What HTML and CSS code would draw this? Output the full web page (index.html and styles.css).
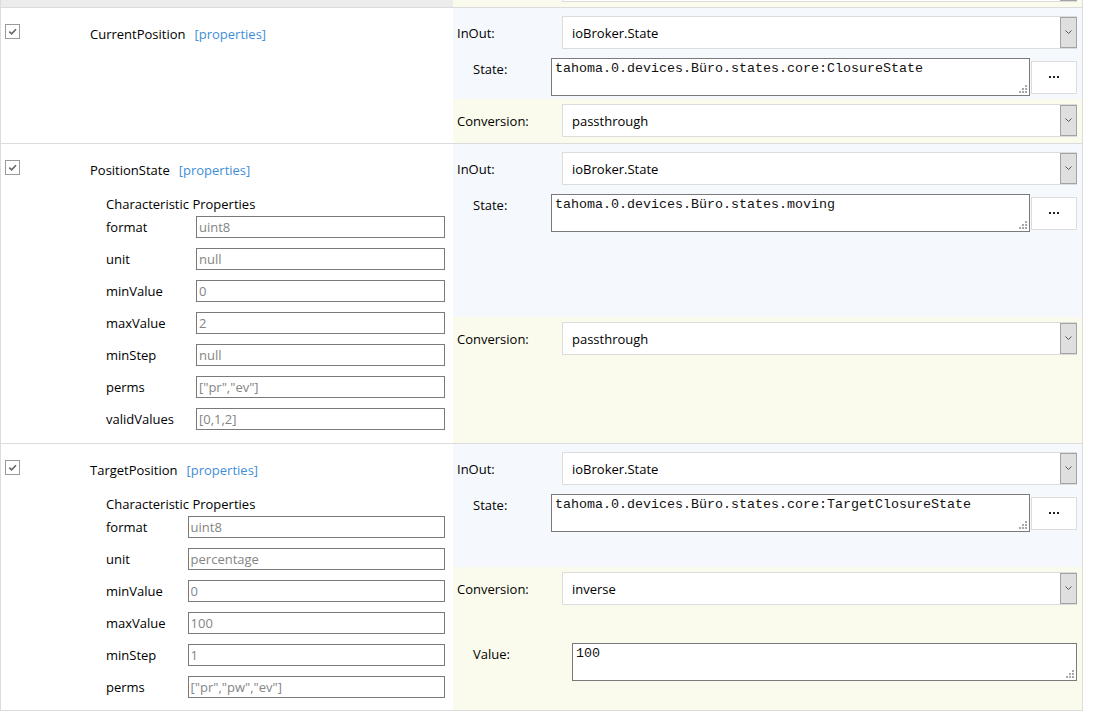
FILE: index.html
```html
<!DOCTYPE html>
<html lang="de">
<head>
<meta charset="utf-8">
<title>Characteristics</title>
<link rel="stylesheet" href="styles.css">
</head>
<body>
<div class="tbl">

  <div class="row row-prev">
    <div class="lc lc-prev"></div>
    <div class="rc">
      <div class="conv conv-prev">
        <div class="frow">
          <span class="lbl"></span>
          <div class="sel sel-prev"><span class="sel-v"></span><span class="sel-arrow"><svg width="7" height="5" viewBox="0 0 7 5"><polyline points="0.5,0.5 3.5,3.5 6.5,0.5" fill="none" stroke="#555" stroke-width="1"/></svg></span></div>
        </div>
      </div>
    </div>
  </div>

  <div class="row">
    <div class="lc">
      <div class="head">
        <span class="cb"><svg width="13" height="13" viewBox="0 0 13 13"><polyline points="3.3,6.6 5.6,8.9 10,4.2" fill="none" stroke="#666" stroke-width="1.6"/></svg></span>
        <span class="nm">CurrentPosition</span>
        <a class="props">[properties]</a>
      </div>
    </div>
    <div class="rc">
      <div class="inout">
        <div class="frow">
          <span class="lbl">InOut:</span>
          <div class="sel"><span class="sel-v">ioBroker.State</span><span class="sel-arrow"><svg width="7" height="5" viewBox="0 0 7 5"><polyline points="0.5,0.5 3.5,3.5 6.5,0.5" fill="none" stroke="#555" stroke-width="1"/></svg></span></div>
        </div>
        <div class="strow">
          <span class="lbl-st">State:</span>
          <textarea class="ta">tahoma.0.devices.Büro.states.core:ClosureState</textarea>
          <button class="dots"><svg width="10" height="2" viewBox="0 0 10 2"><rect x="0" y="0" width="2" height="2" fill="#222"/><rect x="4" y="0" width="2" height="2" fill="#222"/><rect x="8" y="0" width="2" height="2" fill="#222"/></svg></button>
        </div>
      </div>
      <div class="conv">
        <div class="frow">
          <span class="lbl">Conversion:</span>
          <div class="sel"><span class="sel-v">passthrough</span><span class="sel-arrow"><svg width="7" height="5" viewBox="0 0 7 5"><polyline points="0.5,0.5 3.5,3.5 6.5,0.5" fill="none" stroke="#555" stroke-width="1"/></svg></span></div>
        </div>
      </div>
    </div>
  </div>

  <div class="row">
    <div class="lc">
      <div class="head">
        <span class="cb"><svg width="13" height="13" viewBox="0 0 13 13"><polyline points="3.3,6.6 5.6,8.9 10,4.2" fill="none" stroke="#666" stroke-width="1.6"/></svg></span>
        <span class="nm">PositionState</span>
        <a class="props">[properties]</a>
      </div>
      <div class="chars">
        <div class="chars-title">Characteristic Properties</div>
        <div class="pgrid">
          <span class="plbl">format</span><input class="pin" value="uint8" readonly>
          <span class="plbl">unit</span><input class="pin" value="null" readonly>
          <span class="plbl">minValue</span><input class="pin" value="0" readonly>
          <span class="plbl">maxValue</span><input class="pin" value="2" readonly>
          <span class="plbl">minStep</span><input class="pin" value="null" readonly>
          <span class="plbl">perms</span><input class="pin" value="[&quot;pr&quot;,&quot;ev&quot;]" readonly>
          <span class="plbl">validValues</span><input class="pin" value="[0,1,2]" readonly>
        </div>
      </div>
    </div>
    <div class="rc">
      <div class="inout">
        <div class="frow">
          <span class="lbl">InOut:</span>
          <div class="sel"><span class="sel-v">ioBroker.State</span><span class="sel-arrow"><svg width="7" height="5" viewBox="0 0 7 5"><polyline points="0.5,0.5 3.5,3.5 6.5,0.5" fill="none" stroke="#555" stroke-width="1"/></svg></span></div>
        </div>
        <div class="strow">
          <span class="lbl-st">State:</span>
          <textarea class="ta">tahoma.0.devices.Büro.states.moving</textarea>
          <button class="dots"><svg width="10" height="2" viewBox="0 0 10 2"><rect x="0" y="0" width="2" height="2" fill="#222"/><rect x="4" y="0" width="2" height="2" fill="#222"/><rect x="8" y="0" width="2" height="2" fill="#222"/></svg></button>
        </div>
      </div>
      <div class="conv">
        <div class="frow">
          <span class="lbl">Conversion:</span>
          <div class="sel"><span class="sel-v">passthrough</span><span class="sel-arrow"><svg width="7" height="5" viewBox="0 0 7 5"><polyline points="0.5,0.5 3.5,3.5 6.5,0.5" fill="none" stroke="#555" stroke-width="1"/></svg></span></div>
        </div>
      </div>
    </div>
  </div>

  <div class="row">
    <div class="lc lc-last">
      <div class="head">
        <span class="cb"><svg width="13" height="13" viewBox="0 0 13 13"><polyline points="3.3,6.6 5.6,8.9 10,4.2" fill="none" stroke="#666" stroke-width="1.6"/></svg></span>
        <span class="nm">TargetPosition</span>
        <a class="props">[properties]</a>
      </div>
      <div class="chars">
        <div class="chars-title">Characteristic Properties</div>
        <div class="pgrid">
          <span class="plbl">format</span><input class="pin" value="uint8" readonly>
          <span class="plbl">unit</span><input class="pin" value="percentage" readonly>
          <span class="plbl">minValue</span><input class="pin" value="0" readonly>
          <span class="plbl">maxValue</span><input class="pin" value="100" readonly>
          <span class="plbl">minStep</span><input class="pin" value="1" readonly>
          <span class="plbl">perms</span><input class="pin" value="[&quot;pr&quot;,&quot;pw&quot;,&quot;ev&quot;]" readonly>
        </div>
      </div>
    </div>
    <div class="rc">
      <div class="inout">
        <div class="frow">
          <span class="lbl">InOut:</span>
          <div class="sel"><span class="sel-v">ioBroker.State</span><span class="sel-arrow"><svg width="7" height="5" viewBox="0 0 7 5"><polyline points="0.5,0.5 3.5,3.5 6.5,0.5" fill="none" stroke="#555" stroke-width="1"/></svg></span></div>
        </div>
        <div class="strow">
          <span class="lbl-st">State:</span>
          <textarea class="ta">tahoma.0.devices.Büro.states.core:TargetClosureState</textarea>
          <button class="dots"><svg width="10" height="2" viewBox="0 0 10 2"><rect x="0" y="0" width="2" height="2" fill="#222"/><rect x="4" y="0" width="2" height="2" fill="#222"/><rect x="8" y="0" width="2" height="2" fill="#222"/></svg></button>
        </div>
      </div>
      <div class="conv conv-value">
        <div class="frow">
          <span class="lbl">Conversion:</span>
          <div class="sel"><span class="sel-v">inverse</span><span class="sel-arrow"><svg width="7" height="5" viewBox="0 0 7 5"><polyline points="0.5,0.5 3.5,3.5 6.5,0.5" fill="none" stroke="#555" stroke-width="1"/></svg></span></div>
        </div>
        <div class="vrow">
          <span class="lbl-val">Value:</span>
          <textarea class="ta">100</textarea>
        </div>
      </div>
    </div>
  </div>

</div>
</body>
</html>
```
FILE: styles.css
```css
* { box-sizing: border-box; }
html, body { margin: 0; padding: 0; background: #fff; }
body {
  font-family: "Open Sans", "Noto Sans", Arial, sans-serif;
  font-size: 13px;
  color: #000;
}

.tbl {
  width: 1083px;
  border-left: 1px solid #dcdcdc;
  border-right: 1px solid #dcdcdc;
}

.row {
  display: grid;
  grid-template-columns: 452px 629px;
  border-bottom: 1px solid #dcdcdc;
}
.row-prev { height: 8px; overflow: hidden; }

/* left cell */
.lc { padding: 16px 8px 13px 4px; background: #fff; }
.lc-last { padding-bottom: 12px; }
.lc-prev { background: #ececec; padding: 0; }

.head { display: flex; align-items: flex-start; height: 20px; }
.cb {
  width: 15px; height: 15px; flex: none;
  border: 1px solid #9a9a9a; background: #fff;
  display: flex;
}
.nm { margin-left: 70px; margin-top: 1px; line-height: 18px; color: #000; }
.props { margin-left: 9px; margin-top: 1px; line-height: 18px; color: #3f8ed8; text-decoration: none; }

.chars { margin-left: 101px; margin-top: 15px; }
.chars-title { line-height: 18px; color: #000; }
.pgrid {
  display: grid;
  grid-template-columns: auto 1fr;
  column-gap: 22px;
  row-gap: 10px;
  align-items: center;
  margin-top: 3px;
}
.plbl { line-height: 18px; color: #000; }
.pin {
  width: 100%; height: 22px; margin: 0;
  border: 1px solid #7a7a7a; border-radius: 0;
  padding: 0 2px;
  font: inherit; color: #858585; background: #fff;
  outline: none;
}

/* right cell */
.rc { display: flex; flex-direction: column; }
.inout { flex: 1 1 auto; background: #f5f9fd; padding: 8px 5px 3px 4px; }
.conv { flex: 1 1 auto; background: #fafbec; padding: 5px 5px 6px 4px; }
.conv-value { flex-grow: 0; padding-bottom: 29px; }
.conv-prev { padding: 0 5px 0 4px; }
.sel-prev { margin-top: -31px; }

.frow { display: flex; align-items: center; }
.lbl { width: 105px; flex: none; line-height: 18px; color: #000; }
.sel {
  flex: 1; min-width: 0; height: 33px;
  display: flex; align-items: stretch;
  border: 1px solid #dcdcdc; background: #fff;
}
.sel-v { flex: 1; padding-left: 9px; display: flex; align-items: center; color: #000; }
.sel-arrow {
  width: 17px; flex: none;
  margin-right: -1px;
  background: #dfdfdf; border: 1px solid #a3a3a3;
  display: flex; align-items: center; justify-content: center;
}

.strow { display: flex; align-items: center; margin-top: 9px; padding-left: 16px; }
.lbl-st { width: 78px; flex: none; align-self: flex-start; padding-top: 2px; line-height: 18px; color: #000; }
.vrow { display: flex; margin-top: 38px; padding-left: 16px; }
.lbl-val { width: 99px; flex: none; padding-top: 2px; line-height: 18px; color: #000; }

.ta {
  flex: 1; min-width: 0; height: 38px; margin: 0;
  border: 1px solid #7a7a7a; border-radius: 0;
  padding: 2px 3px;
  font-family: "Liberation Mono", "Courier New", monospace;
  font-size: 13.33px; line-height: 16px;
  color: #111;
  resize: none;
  outline: none;
  background-color: #fff;
  background-image:
    linear-gradient(#a8a8a8, #a8a8a8),
    linear-gradient(#a8a8a8, #a8a8a8),
    linear-gradient(#a8a8a8, #a8a8a8),
    linear-gradient(#a8a8a8, #a8a8a8),
    linear-gradient(#a8a8a8, #a8a8a8),
    linear-gradient(#a8a8a8, #a8a8a8);
  background-size: 2px 2px;
  background-repeat: no-repeat;
  background-position:
    right 2px bottom 2px,
    right 5px bottom 2px,
    right 8px bottom 2px,
    right 2px bottom 5px,
    right 5px bottom 5px,
    right 2px bottom 8px;
}
.dots {
  width: 46px; height: 33px; flex: none; margin: 0 0 0 1px; padding: 0;
  border: 1px solid #dcdcdc; border-radius: 0; background: #fff;
  display: flex; align-items: center; justify-content: center;
}
```
